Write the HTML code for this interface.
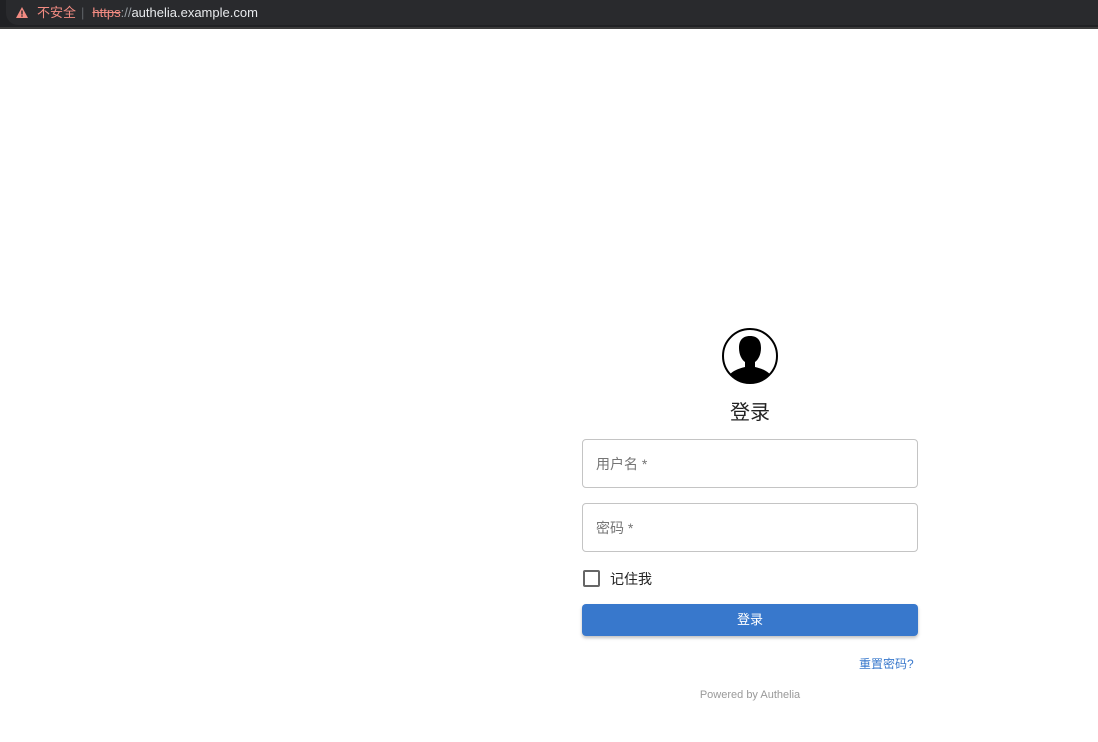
<!DOCTYPE html>
<html><head><meta charset="utf-8"><style>
body{margin:0;width:1098px;height:742px;background:#fff;position:relative;overflow:hidden;font-family:"Liberation Sans","Noto Sans CJK SC",sans-serif}
.bar{position:absolute;left:0;top:0;width:1098px;height:27px;background:#202124;border-bottom:2px solid #3c3c3c}
.pill{position:absolute;left:6px;top:0;width:1100px;height:25px;background:#292a2d;border-radius:0 0 0 12px}
.url{position:absolute;left:37px;top:4px;font-size:13px;line-height:17px;white-space:nowrap}
.abs{position:absolute}
.field{position:absolute;left:582px;width:334px;height:47px;border:1px solid #c4c4c4;border-radius:4px}
.field span{position:absolute;left:13px;top:14px;font-size:14px;color:#757575}
</style></head><body>
<div class="bar"><div class="pill"></div>
<svg class="abs" style="left:16px;top:7px" width="12" height="11" viewBox="0 0 12 11"><path d="M6 0L12 11H0Z" fill="#f28b82"/><rect x="5.3" y="3.5" width="1.4" height="4" fill="#292a2d"/><rect x="5.3" y="8.3" width="1.4" height="1.4" fill="#292a2d"/></svg>
<div class="url"><span style="color:#f28b82">不安全</span><span style="color:#5f6368;margin:0 8px 0 5px">|</span><span style="color:#f28b82;text-decoration:line-through">https</span><span style="color:#9aa0a6">://</span><span style="color:#e8eaed">authelia.example.com</span></div>
</div>
<svg class="abs" style="left:721px;top:327px" width="58" height="58" viewBox="0 0 58 58"><defs><clipPath id="c"><circle cx="29" cy="29" r="26.5"/></clipPath></defs><circle cx="29" cy="29" r="27" fill="#fff" stroke="#000" stroke-width="2"/><g clip-path="url(#c)"><path d="M29 9C21 9 18 14 18 21C18 28 21 33 24 35L24 40C16 42 8 45 7 52L7 60H51L51 52C50 45 42 42 34 40L34 35C37 33 40 28 40 21C40 14 37 9 29 9Z" fill="#000"/></g></svg>
<div class="abs" style="left:0;width:1500px;text-align:center;top:396px;font-size:20px;color:#222">登录</div>
<div class="field" style="top:439px"><span>用户名 *</span></div>
<div class="field" style="top:503px"><span>密码 *</span></div>
<div class="abs" style="left:583px;top:570px;width:13px;height:13px;border:2px solid #666;border-radius:2px"></div>
<div class="abs" style="left:610px;top:569px;font-size:14px;color:#222">记住我</div>
<div class="abs" style="left:582px;top:604px;width:336px;height:32px;background:#3878cc;border-radius:4px;box-shadow:0 2px 3px rgba(0,0,0,.25);color:#fff;text-align:center;line-height:32px;font-size:13px">登录</div>
<div class="abs" style="left:859px;top:655px;font-size:12px;color:#3878cc">重置密码?</div>
<div class="abs" style="left:0;width:1500px;text-align:center;top:689px;font-size:11px;color:#999">Powered by Authelia</div>
</body></html>
